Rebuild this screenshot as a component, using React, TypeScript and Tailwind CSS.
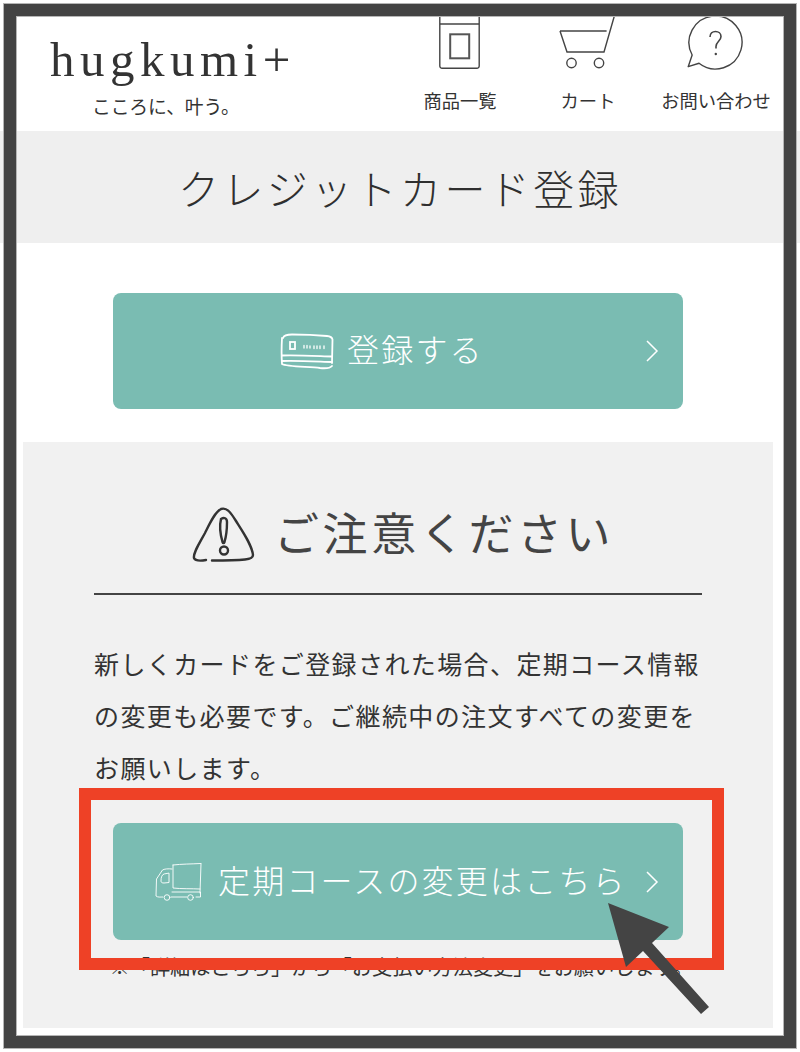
import React from "react";

const jp = "font-['Noto_Sans_CJK_JP','Noto_Sans',sans-serif]";

const ItemsIcon = () => (
  <svg width="46" height="62" viewBox="0 0 46 62" fill="none" stroke="#444">
    <path d="M2.800 0V56a2.300 2.300 0 0 0 2.300 2.300H39.900a2.300 2.300 0 0 0 2.300-2.300V0" strokeWidth="1.400" />
    <path d="M3 14H42" strokeWidth="1.400" />
    <rect x="13.200" y="24.300" width="19" height="24" stroke="#555" strokeWidth="2" />
  </svg>
);

const CartIcon = () => (
  <svg width="62" height="62" viewBox="0 0 62 62" fill="none" stroke="#444" strokeWidth="1.400">
    <path d="M3 21H49.600M3 21L10 42H47L58.500 2" />
    <circle cx="14.500" cy="53" r="4.700" />
    <circle cx="42" cy="53" r="4.700" />
  </svg>
);

const QuestionIcon = () => (
  <svg width="62" height="62" viewBox="0 0 62 62" fill="none" stroke="#444" strokeWidth="1.400">
    <path d="M7.150 45.030L3.200 56.700L14.040 53.260A26.500 26.500 0 1 0 7.150 45.030Z" strokeLinejoin="round" />
    <path d="M25 27c0-3.500 2.500-5.500 5.500-5.500s5.500 2 5.500 5c0 4.500-5 5-5 10v2" strokeWidth="1.600" />
    <circle cx="30.800" cy="44" r="1.200" fill="#444" stroke="none" />
  </svg>
);

const CardIcon = () => (
  <svg width="54" height="37" viewBox="0 0 54 37" fill="none" stroke="#fff" strokeWidth="1.800" strokeLinecap="round">
    <path d="M3 5C4 2 7 1.500 12 1.500C24 1.500 36 2 47 3C50 3.300 52 4 52.500 6.500L52 30" />
    <path d="M2 5C1.500 14 1.500 24 2 31C7 34 30 33.500 40 35C45 35.500 50 35.500 52 33" />
    <path d="M2 22.500C18 22 36 23 52 23.500M2 28C18 27.500 36 28.500 52 29" />
    <rect x="10" y="9" width="5" height="7" strokeWidth="1.800" />
    <path d="M24 12.500v2.500M27 12.500v2.500M30 13v2M34 13v2.500M37 13v2.500M40 13v2.500M44 13v2.500" strokeWidth="1.300" />
  </svg>
);

const TruckIcon = () => (
  <svg width="48" height="40" viewBox="0 0 48 40" fill="none" stroke="#fff" strokeWidth="0.900" strokeLinecap="round">
    <path d="M18 3C27 2 36 2 46 1.500M46 2L45 31M18 3L18 26C26 27 36 26.500 45 27M17 30H45.500V35H41" />
    <path d="M17 7C13 6.500 9 7 7.500 8L1.500 17L1 34C3 35.500 5 35 8 35" />
    <path d="M9 12C7 12.500 6 15 6 19C6 20.500 7 21 9 21L14 20.500L14 11.500Z" />
    <path d="M16 35H32" />
    <circle cx="12" cy="35.500" r="2.800" />
    <circle cx="35.500" cy="35.500" r="2.800" />
  </svg>
);

const WarningIcon = () => (
  <svg width="64" height="58" viewBox="0 0 64 58" fill="none" stroke="#333" strokeWidth="2.400" strokeLinecap="round">
    <path d="M15 54C9 55 4 54.500 3 52C2 47 8 38 14 27C19 17 24 6 30 3C36 1 40 7 45 15C52 26 61 39 62 49C62 52 59 53 54 53.500C44 54.500 33 54.500 21 54.500" />
    <path d="M30 13C33 11 36 12 36 16C36 23 35 31 33.500 36C33 37.500 32 37.500 31.500 36C29.500 29 28.500 19 30 13Z" />
    <circle cx="33" cy="44.500" r="4" />
  </svg>
);

const Chevron = () => (
  <svg className="ml-auto mr-[24px]" width="14" height="24" viewBox="0 0 14 24" fill="none" stroke="#fff" strokeWidth="1.500">
    <path d="M2 2L12 12L2 22" />
  </svg>
);

const NavItem = ({ label, children }: { label: string; children: React.ReactNode }) => (
  <div className="w-[128px] flex flex-col items-center pt-[10px]">
    <div className="h-[62px] flex justify-center">{children}</div>
    <span className={`mt-[15px] text-[18.300px] leading-[26px] whitespace-nowrap text-[#333] ${jp}`}>{label}</span>
  </div>
);

export default function App() {
  return (
    <div className="relative w-[800px] h-[1052px] overflow-hidden bg-white">
      <header className="h-[131px] flex justify-between pr-[20px]">
        <div className="pl-[50px] pt-[29px]">
          <div className="font-['Liberation_Serif',serif] text-[49px] leading-[62px] tracking-[5.500px] text-[#333]">hugkumi+</div>
          <div className={`pl-[42px] pt-[2px] text-[18.800px] leading-[26px] tracking-[-0.100px] text-[#333] ${jp}`}>こころに、叶う。</div>
        </div>
        <nav className="flex">
          <NavItem label="商品一覧"><ItemsIcon /></NavItem>
          <NavItem label="カート"><CartIcon /></NavItem>
          <NavItem label="お問い合わせ"><QuestionIcon /></NavItem>
        </nav>
      </header>

      <div className="h-[112px] bg-[#efefef] flex items-center justify-center">
        <h1 className={`text-[41px] leading-[56px] font-light tracking-[3.400px] text-[#2f2f2f] ${jp}`}>クレジットカード登録</h1>
      </div>

      <div className="pl-[113px] pr-[117px] pt-[50px]">
        <a className="h-[116px] rounded-[8px] bg-[#7abcb2] flex items-center pl-[167px] text-white">
          <CardIcon />
          <span className={`ml-[13px] pb-[6px] text-[32px] leading-[44px] font-light tracking-[2.200px] ${jp}`}>登録する</span>
          <Chevron />
        </a>
      </div>

      <section className="mx-[23px] mt-[33px] w-[750px] h-[586px] bg-[#f1f1f1] px-[71px] pt-[60px] overflow-hidden">
        <div className="flex items-center h-[66px] pl-[97px]">
          <WarningIcon />
          <h2 className={`ml-[19px] pb-[6px] text-[45px] leading-[66px] whitespace-nowrap font-normal tracking-[3.600px] text-[#444] ${jp}`}>ご注意ください</h2>
        </div>
        <div className="mt-[25px] border-t-2 border-[#444]" />
        <p className={`mt-[42px] text-[25px] leading-[52px] tracking-[1.400px] text-[#333] ${jp}`}>
          新しくカードをご登録された場合、定期コース情報の変更も必要です。ご継続中の注文すべての変更をお願いします。
        </p>
        <a className="mx-[19px] mt-[30px] h-[117px] rounded-[8px] bg-[#7abcb2] flex items-center pl-[42px] text-white">
          <TruckIcon />
          <span className={`ml-[15px] pb-[6px] text-[32px] leading-[44px] font-light tracking-[2.200px] whitespace-nowrap ${jp}`}>定期コースの変更はこちら</span>
          <Chevron />
        </a>
        <p className={`mt-[14px] pl-[15.500px] text-[20.200px] leading-[26px] whitespace-nowrap text-[#333] ${jp}`}>
          ※「詳細はこちら」から「お支払い方法変更」をお願いします。
        </p>
      </section>

      {/* annotations drawn on top of the page */}
      <div className="absolute left-[79px] top-[788px] w-[645px] h-[182px] border-[12px] border-[#ee4126]" />
      <svg className="absolute left-0 top-0" width="800" height="1052" viewBox="0 0 800 1052">
        <polygon points="608,903 669,927 652,943 709,1007 701,1014 643,951 626,967" fill="#444" />
      </svg>
      <div className="absolute left-[4px] top-[4px] w-[792px] h-[1044px] border-[12px] border-[#434343] outline outline-1 outline-[#b5b5b5] shadow-[inset_0_0_0_1px_#b5b5b5]" />
    </div>
  );
}
